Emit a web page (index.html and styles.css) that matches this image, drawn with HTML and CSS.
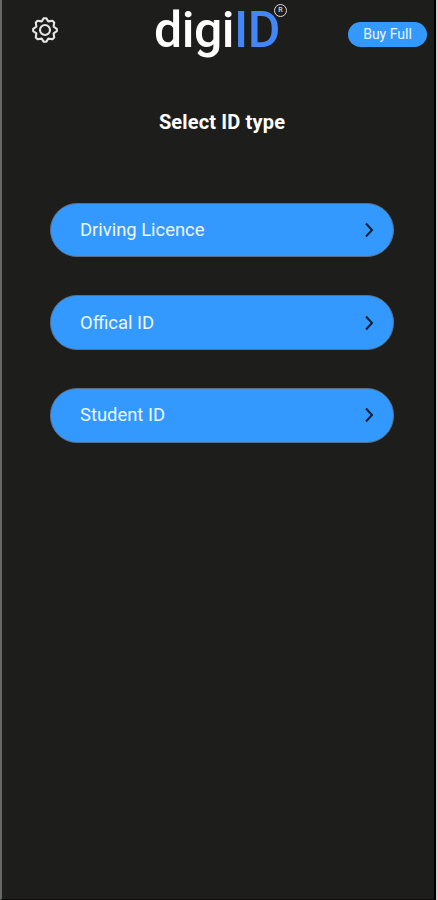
FILE: index.html
```html
<!DOCTYPE html>
<html lang="en">
<head>
  <meta charset="UTF-8">
  <meta name="viewport" content="width=device-width, initial-scale=1.0">
  <title>digiID</title>
  <link rel="stylesheet" href="styles.css">
</head>
<body>
  <div class="screen">
    <header class="topbar">
      <button type="button" class="settings" aria-label="Settings">
        <svg width="28" height="28" viewBox="-14 -14 28 28" fill="none" stroke="#e6e6e6" stroke-width="2.1" stroke-linejoin="round">
          <path d="M-1.2-11.8H1.2L3.3-8.6L7.4-9.2L9.2-7.4L8.6-3.3L11.8-1.2V1.2L8.6 3.3L9.2 7.4L7.4 9.2L3.3 8.6L1.2 11.8H-1.2L-3.3 8.6L-7.4 9.2L-9.2 7.4L-8.6 3.3L-11.8 1.2V-1.2L-8.6-3.3L-9.2-7.4L-7.4-9.2L-3.3-8.6Z"/>
          <circle r="5"/>
        </svg>
      </button>
      <h1 class="logo">digi<span class="logo-id">ID</span><span class="mark">R</span></h1>
      <button type="button" class="buy">Buy Full</button>
    </header>

    <h2>Select ID type</h2>

    <nav class="types">
      <button type="button" class="type"><span>Driving Licence</span>
        <svg class="chevron" width="10" height="16" viewBox="0 0 10 16"><path d="M2 1.5L8 8L2 14.5"/></svg>
      </button>
      <button type="button" class="type"><span>Offical ID</span>
        <svg class="chevron" width="10" height="16" viewBox="0 0 10 16"><path d="M2 1.5L8 8L2 14.5"/></svg>
      </button>
      <button type="button" class="type"><span>Student ID</span>
        <svg class="chevron" width="10" height="16" viewBox="0 0 10 16"><path d="M2 1.5L8 8L2 14.5"/></svg>
      </button>
    </nav>
  </div>
</body>
</html>
```
FILE: styles.css
```css
* {
  box-sizing: border-box;
}
body {
  margin: 0;
  background: #d4d4d4;
  font-family: Roboto, sans-serif;
}
.screen {
  width: 436px;
  height: 900px;
  background: #1d1e1b;
  border-left: 2px solid #666a67;
  border-right: 2px solid #000;
  border-bottom: 1px solid #100b0e;
}
button {
  border: none;
  padding: 0;
  font-family: inherit;
  cursor: pointer;
}
.topbar {
  display: grid;
  grid-template-columns: 152px 1fr 79px;
  height: 66px;
  padding-right: 7px;
}
.settings {
  width: 28px;
  height: 28px;
  margin: 16px 0 0 29px;
  background: none;
}
.settings svg {
  display: block;
}
.logo {
  position: relative;
  justify-self: start;
  margin: 0;
  color: #fff;
  font-size: 50px;
  font-weight: 500;
  line-height: 60px;
  letter-spacing: -0.5px;
  white-space: nowrap;
}
.logo-id {
  color: #4387f6;
}
.mark {
  position: absolute;
  top: 4px;
  left: 120px;
  width: 13px;
  height: 13px;
  border: 1.3px solid #ddd;
  border-radius: 50%;
  color: #ddd;
  font-size: 7px;
  font-weight: 500;
  line-height: 11px;
  letter-spacing: 0;
  text-align: center;
}
.buy {
  height: 25px;
  margin-top: 22px;
  padding-bottom: 1px;
  border-radius: 13px;
  background: #3399ff;
  color: #eef6ff;
  font-size: 14px;
}
h2 {
  margin: 44px 0 0 8px;
  color: #fff;
  font-size: 20px;
  font-weight: 700;
  line-height: 24px;
  letter-spacing: 0.15px;
  text-align: center;
}
.types {
  display: flex;
  flex-direction: column;
  gap: 38.7px;
  margin: 68.6px 40px 0 47.5px;
}
.type {
  display: flex;
  align-items: center;
  justify-content: space-between;
  height: 54.2px;
  padding: 0 19px 0 29.5px;
  border: 1px solid #58718a;
  border-radius: 27px;
  background: #3399ff;
  color: #eef6ff;
  font-size: 18.4px;
}
.type span {
  padding-bottom: 1px;
}
.chevron {
  fill: none;
  stroke: #0b2038;
  stroke-width: 2;
}
```
